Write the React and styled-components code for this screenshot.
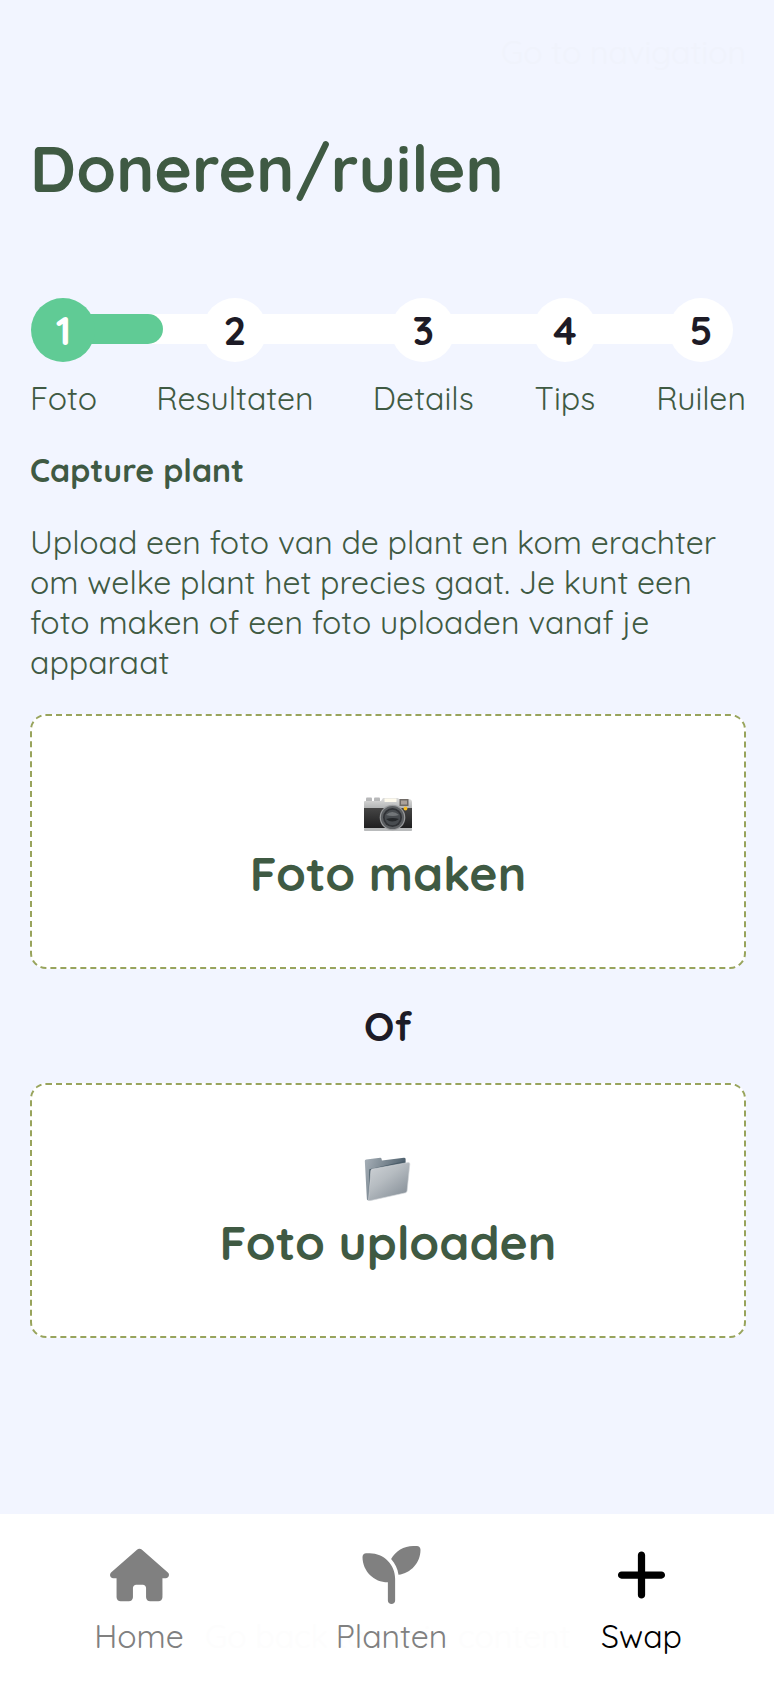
import React from "react";
import styled, { createGlobalStyle } from "styled-components";
import { FaHouse, FaSeedling, FaPlus } from "react-icons/fa6";

const GlobalStyle = createGlobalStyle`
  * { box-sizing: border-box; }
  body {
    margin: 0;
    background: #f2f5ff;
    color: #3f5a43;
    font-family: Quicksand, Inter, sans-serif;
    font-size: 32px;
    font-weight: 400;
    line-height: 40px;
  }
`;

const Page = styled.div`
  min-height: 1686px;
  display: flex;
  flex-direction: column;
`;

const Main = styled.main`
  flex: 1;
  padding: 32px 28px 0 30px;
  display: flex;
  flex-direction: column;
`;

const SkipLink = styled.a`
  align-self: flex-end;
  height: 40px;
  color: #f0f3fc;
`;

const Title = styled.h1`
  margin: 56px 0 90px;
  font-size: 64px;
  font-weight: 700;
  line-height: 80px;
`;

const Stepper = styled.div`
  display: grid;
`;

const Track = styled.div`
  grid-area: 1 / 1;
  height: 30px;
  margin: 16px 45px 0 33px;
  background: #fff;
`;

const Progress = styled.div`
  width: 100px;
  height: 100%;
  border-radius: 0 15px 15px 0;
  background: #60cb95;
`;

const Steps = styled.ol`
  grid-area: 1 / 1;
  margin: 0;
  padding: 0;
  list-style: none;
  display: flex;
  justify-content: space-between;
`;

const Step = styled.li`
  display: flex;
  flex-direction: column;
  align-items: center;
  gap: 16px;
`;

const StepNumber = styled.div`
  width: 64px;
  height: 64px;
  border-radius: 50%;
  display: grid;
  place-items: center;
  background: ${(p) => (p.$active ? "#60cb95" : "#fff")};
  color: ${(p) => (p.$active ? "#fff" : "#1d1b26")};
  font-size: 40px;
  font-weight: 700;
`;

const Subtitle = styled.h2`
  margin: 32px 0;
  font-size: 32px;
  font-weight: 700;
  line-height: 40px;
`;

const Description = styled.p`
  margin: 0 0 32px;
`;

const UploadCard = styled.button`
  width: 716px;
  height: 255px;
  padding: 74px 0 0;
  border: 2px dashed #98a45c;
  border-radius: 16px;
  background: #fff;
  color: inherit;
  font: inherit;
  display: flex;
  flex-direction: column;
  align-items: center;
  gap: 3px;
`;

const CardIcon = styled.svg`
  width: 52px;
  height: 50px;
  overflow: visible;
`;

const CardLabel = styled.span`
  font-size: 48px;
  font-weight: 700;
  line-height: 60px;
`;

const Divider = styled.div`
  width: 716px;
  margin: 32px 0;
  text-align: center;
  color: #1d1b26;
  font-size: 40px;
  font-weight: 700;
  line-height: 50px;
`;

const NavBar = styled.nav`
  height: 172px;
  padding: 31px 9px 0 13px;
  background: #fff;
  display: grid;
  grid-template-columns: 252px 253px 1fr;
  position: relative;
`;

const NavItem = styled.a`
  display: flex;
  flex-direction: column;
  align-items: center;
  gap: 12px;
  z-index: 1;
  color: ${(p) => (p.$active ? "#000" : "#808080")};
`;

const NavIcon = styled.span`
  height: 59px;
  display: grid;
  place-items: center;
  svg {
    width: 59px;
    height: 58px;
  }
`;

const BackLink = styled.a`
  position: absolute;
  left: 205px;
  top: 102px;
  color: #fdfdfd;
`;

function CameraIcon() {
  return (
    <CardIcon viewBox="0 0 52 50" aria-hidden="true">
      <defs>
        <linearGradient id="camTop" x1="0" y1="0" x2="0" y2="1">
          <stop offset="0" stopColor="#dededd" />
          <stop offset="1" stopColor="#aeb0b1" />
        </linearGradient>
        <linearGradient id="camBody" x1="0" y1="0" x2="0" y2="1">
          <stop offset="0" stopColor="#454545" />
          <stop offset="1" stopColor="#1f1f20" />
        </linearGradient>
      </defs>
      <g transform="translate(-1 0)">
        <rect x="5" y="7.5" width="6" height="5" rx="1" fill="#b7b8b9" />
        <rect x="13" y="7.5" width="6" height="5" rx="1" fill="#b7b8b9" />
        <path d="M3 12q0-1 1-1h16l2-3h15l1 1h9q4 0 4 3v7H3z" fill="url(#camTop)" />
        <rect x="3" y="18" width="48" height="20" fill="url(#camBody)" />
        <rect x="3" y="38" width="48" height="3" rx="0.8" fill="#b9bbbc" />
        <rect x="23.5" y="8.5" width="12" height="3.5" rx="0.5" fill="#fffbed" />
        <rect x="38.5" y="9" width="9" height="7" fill="#706b67" />
        <rect x="40" y="10.5" width="6" height="4" fill="#aaa19a" />
        <circle cx="31.5" cy="27.5" r="12.8" fill="#9a9c9e" />
        <circle cx="31.5" cy="27.5" r="11.6" fill="#5c5f62" />
        <circle cx="31.5" cy="27.5" r="9.5" fill="#303236" />
        <circle cx="31.5" cy="27.5" r="7.8" fill="#484c50" />
        <path d="M25 25q6-6 13 0-6 2-13 0" fill="#727679" />
        <path d="M25 29q6 5 13 0-6-2-13 0" fill="#25282b" />
        <circle cx="44.5" cy="18.5" r="1.9" fill="#f7bb25" />
      </g>
    </CardIcon>
  );
}

function FolderIcon() {
  return (
    <CardIcon viewBox="0 0 52 50" aria-hidden="true">
      <defs>
        <linearGradient id="folderBack" x1="0" y1="0" x2="1" y2="0.4">
          <stop offset="0" stopColor="#a7b0b8" />
          <stop offset="0.5" stopColor="#78858f" />
          <stop offset="1" stopColor="#415563" />
        </linearGradient>
        <linearGradient id="folderFront" x1="0" y1="0" x2="0.8" y2="1">
          <stop offset="0" stopColor="#d0d4d8" />
          <stop offset="0.45" stopColor="#b6bcc1" />
          <stop offset="1" stopColor="#858e97" />
        </linearGradient>
      </defs>
      <g transform="translate(-1.3 -8.4) scale(1.03)">
        <path d="M4 10.2q0-1.3 1.3-1.5L19 7q1 0 1.2 1l.4 1.6L42 7q1.6 0 1.6 1.2V39L7.8 48.3q-1.6.2-1.8-1z" fill="url(#folderBack)" />
        <path d="M8.4 18 43 10v28L7.6 47z" fill="#4b5d69" />
        <path d="M9.8 19.8q0-1.6 1.5-1.9L46 11.6q1.8-.2 1.7 1.5L45 39.3q-.2 1.3-1.5 1.7L9 48.6q-1.6.2-1.4-1.2z" fill="url(#folderFront)" stroke="#d3d6d9" strokeWidth="0.6" />
      </g>
    </CardIcon>
  );
}

const steps = ["Foto", "Resultaten", "Details", "Tips", "Ruilen"];

const navItems = [
  { label: "Home", Icon: FaHouse },
  { label: "Planten", Icon: FaSeedling },
  { label: "Swap", Icon: FaPlus, active: true },
];

export default function App() {
  return (
    <Page>
      <GlobalStyle />
      <Main>
        <SkipLink>Go to navigation</SkipLink>
        <Title>Doneren/ruilen</Title>
        <Stepper>
          <Track>
            <Progress />
          </Track>
          <Steps>
            {steps.map((label, i) => (
              <Step key={label}>
                <StepNumber $active={i === 0}>{i + 1}</StepNumber>
                <span>{label}</span>
              </Step>
            ))}
          </Steps>
        </Stepper>
        <Subtitle>Capture plant</Subtitle>
        <Description>
          Upload een foto van de plant en kom erachter om welke plant het
          precies gaat. Je kunt een foto maken of een foto uploaden vanaf je
          apparaat
        </Description>
        <UploadCard>
          <CameraIcon />
          <CardLabel>Foto maken</CardLabel>
        </UploadCard>
        <Divider>Of</Divider>
        <UploadCard>
          <FolderIcon />
          <CardLabel>Foto uploaden</CardLabel>
        </UploadCard>
      </Main>
      <NavBar>
        <BackLink>Go back to main content</BackLink>
        {navItems.map(({ label, Icon, active }) => (
          <NavItem key={label} $active={active}>
            <NavIcon>
              <Icon />
            </NavIcon>
            <span>{label}</span>
          </NavItem>
        ))}
      </NavBar>
    </Page>
  );
}
